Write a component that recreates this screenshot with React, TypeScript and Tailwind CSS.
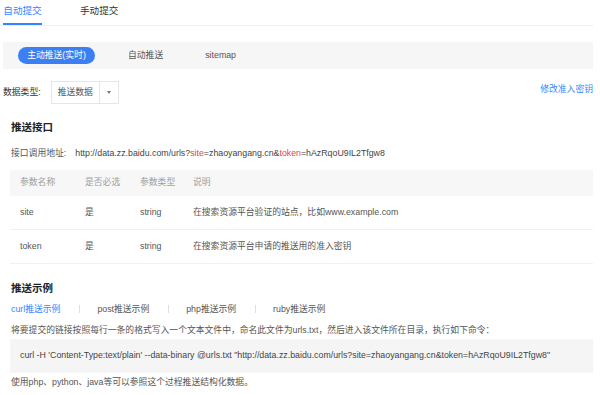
import React from "react";

const FONT = { fontFamily: '"Liberation Sans", "Noto Sans CJK SC", sans-serif' } as const;

export default function App() {
  return (
    <div className="w-[600px] h-[395px] bg-white overflow-hidden text-[8.8px] text-[#555] whitespace-nowrap" style={FONT}>
      <div className="w-[593px]">
        {/* top tabs */}
        <div className="flex h-[26px] border-b border-[#eeeeee] text-[9.6px]">
          <div className="ml-[3px] w-[39px] flex flex-col items-center">
            <div className="h-[24px] leading-[22px] text-[#3385ff]">自动提交</div>
            <div className="h-[2px] w-full bg-[#3385ff]" />
          </div>
          <div className="ml-[38px] h-[24px] leading-[22px] text-[#333]">手动提交</div>
        </div>

        {/* sub tabs */}
        <div className="mt-[16px] ml-[3px] h-[27px] bg-[#f6f6f6] flex items-center">
          <div className="ml-[15px] w-[77px] h-[17px] rounded-full bg-[#3b7ff3] text-white flex items-center justify-center">主动推送(实时)</div>
          <div className="ml-[33px] text-[#555]">自动推送</div>
          <div className="ml-[42px] text-[#555]">sitemap</div>
        </div>

        {/* data type */}
        <div className="mt-[12px] flex items-start">
          <div className="ml-[3px] h-[23px] leading-[23px] text-[#333]">数据类型:</div>
          <div className="ml-[10px] h-[23px] w-[68px] border border-[#e6e6e6] flex">
            <div className="w-[47px] leading-[21px] pl-[6px] text-[#555]">推送数据</div>
            <div className="flex-1 border-l border-[#e6e6e6] flex items-center justify-center">
              <div className="w-0 h-0 border-l-[2.5px] border-r-[2.5px] border-t-[3px] border-l-transparent border-r-transparent border-t-[#777]" />
            </div>
          </div>
          <div className="ml-auto mt-[1px] leading-[14px] text-[#3385ff]">修改准入密钥</div>
        </div>

        {/* 推送接口 */}
        <div className="mt-[16px] ml-[11px] leading-[14px] text-[10.5px] font-bold text-[#222]">推送接口</div>
        <div className="mt-[13px] ml-[11px] leading-[12px] flex">
          <span className="text-[#555]">接口调用地址:</span>
          <span className="ml-[9px] text-[#444]">
            http://data.zz.baidu.com/urls?<span className="text-[#f03c3c]">site</span>=zhaoyangang.cn&amp;<span className="text-[#f03c3c]">token</span>=hAzRqoU9IL2Tfgw8
          </span>
        </div>

        {/* table */}
        <div className="mt-[11px] ml-[10px]">
          <div className="h-[26px] bg-[#f7f7f7] flex items-center text-[#a0a0a0] pl-[10px]">
            <div className="w-[65px]">参数名称</div>
            <div className="w-[55px]">是否必选</div>
            <div className="w-[53px]">参数类型</div>
            <div>说明</div>
          </div>
          <div className="h-[34px] border-b border-[#f0f0f0] flex items-center pl-[10px] text-[#555]">
            <div className="w-[65px]">site</div>
            <div className="w-[55px]">是</div>
            <div className="w-[53px]">string</div>
            <div>在搜索资源平台验证的站点，比如www.example.com</div>
          </div>
          <div className="h-[34px] border-b border-[#f0f0f0] flex items-center pl-[10px] text-[#555]">
            <div className="w-[65px]">token</div>
            <div className="w-[55px]">是</div>
            <div className="w-[53px]">string</div>
            <div>在搜索资源平台申请的推送用的准入密钥</div>
          </div>
        </div>

        {/* 推送示例 */}
        <div className="mt-[17px] ml-[11px] leading-[14px] text-[10.5px] font-bold text-[#222]">推送示例</div>
        <div className="mt-[8px] ml-[11px] flex items-center leading-[12px]">
          <span className="text-[#3385ff]">curl推送示例</span>
          <span className="ml-[19px] mr-[17px] w-px h-[8px] bg-[#e0e0e0]" />
          <span className="text-[#555]">post推送示例</span>
          <span className="ml-[19px] mr-[17px] w-px h-[8px] bg-[#e0e0e0]" />
          <span className="text-[#555]">php推送示例</span>
          <span className="ml-[19px] mr-[17px] w-px h-[8px] bg-[#e0e0e0]" />
          <span className="text-[#555]">ruby推送示例</span>
        </div>
        <div className="mt-[9px] ml-[11px] leading-[12px] text-[#555]">
          将要提交的链接按照每行一条的格式写入一个文本文件中，命名此文件为urls.txt，然后进入该文件所在目录，执行如下命令：
        </div>
        <div className="mt-[3px] ml-[10px] h-[34px] bg-[#f5f5f5] flex items-center pl-[10px] text-[#444]">
          curl -H 'Content-Type:text/plain' --data-binary @urls.txt "http://data.zz.baidu.com/urls?site=zhaoyangang.cn&amp;token=hAzRqoU9IL2Tfgw8"
        </div>
        <div className="mt-[3px] ml-[11px] leading-[12px] text-[#555]">
          使用php、python、java等可以参照这个过程推送结构化数据。
        </div>
      </div>
    </div>
  );
}
